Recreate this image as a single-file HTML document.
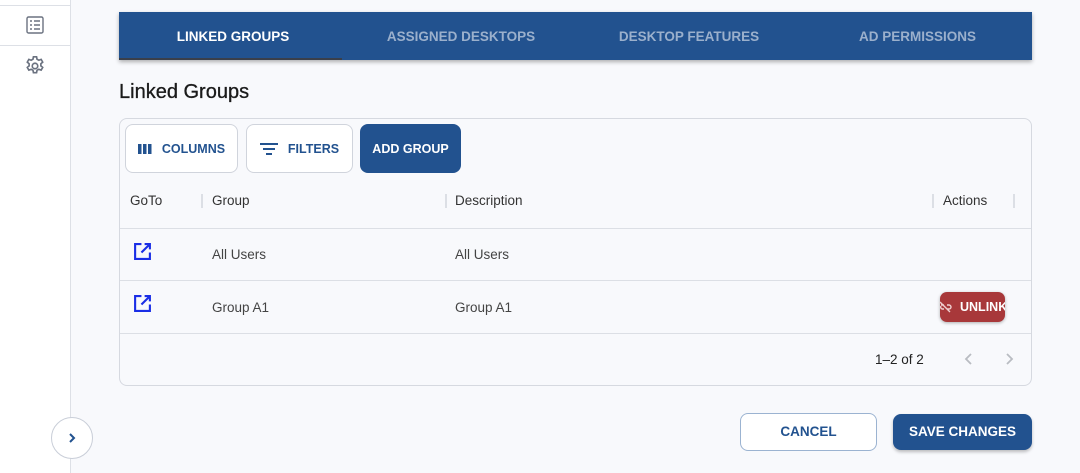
<!DOCTYPE html>
<html><head><style>
*{box-sizing:border-box;margin:0;padding:0}
body{width:1080px;height:473px;background:#f8f9fc;font-family:"Liberation Sans",sans-serif;position:relative;overflow:hidden}
.side{position:absolute;left:0;top:0;width:71px;height:473px;background:#fff;border-right:1px solid #dde0e6}
.abs{position:absolute}
.tabs{position:absolute;left:119px;top:12px;width:913px;height:48px;background:#22528f;box-shadow:0 2px 4px rgba(0,0,0,.3)}
.tab{position:absolute;top:1px;height:48px;line-height:48px;font-size:13.5px;font-weight:bold;text-align:center;color:#9bb0cc}
.card{position:absolute;left:119px;top:118px;width:913px;height:268px;background:#f8f9fc;border:1px solid #d6d9e0;border-radius:8px}
.btn{position:absolute;top:5px;height:49px;border-radius:8px;font-size:12.5px;font-weight:bold;display:flex;align-items:center;justify-content:center;gap:10px}
.t{position:absolute;font-size:13.5px;color:#333}
.line{position:absolute;left:0;width:911px;height:1px;background:#dcdfe5}
.sep{position:absolute;width:2px;height:14px;background:#dcdfe5}
</style></head><body>
<div class="side">
<div class="abs" style="left:0;top:5px;width:70px;height:1px;background:#dde0e6"></div>
<div class="abs" style="left:0;top:45px;width:70px;height:1px;background:#dde0e6"></div>
<svg class="abs" style="left:26px;top:16px" width="18" height="18" viewBox="0 0 18 18" fill="none" stroke="#6b7280" stroke-width="1.4"><rect x="1" y="1" width="16" height="16" rx="1.5"/><path d="M4 5h2M8 5h6M4 9h2M8 9h6M4 13h2M8 13h6"/></svg>
<svg class="abs" style="left:24px;top:55px" width="22" height="22" viewBox="0 0 24 24" fill="none" stroke="#6b7280" stroke-width="1.8"><circle cx="12" cy="12" r="3"/><path d="M10.3 2h3.4l.5 2.6 2 1.1 2.5-.9 1.7 3-2 1.7v2.3l2 1.7-1.7 3-2.5-.9-2 1.1-.5 2.6h-3.4l-.5-2.6-2-1.1-2.5.9-1.7-3 2-1.7V9.5l-2-1.7 1.7-3 2.5.9 2-1.1z"/></svg>
<div class="abs" style="left:51px;top:417px;width:42px;height:42px;border-radius:50%;border:1px solid #c9ced8;background:#fff"></div>
</div>
<svg class="abs" style="left:66px;top:432px" width="12" height="12" viewBox="0 0 12 12" fill="none" stroke="#22528f" stroke-width="2"><path d="M4 2l4 4-4 4"/></svg>
<div class="tabs">
<div class="tab" style="left:0;width:228px;color:#fff">LINKED GROUPS</div>
<div class="abs" style="left:0;top:46px;width:223px;height:2px;background:#3a3f4a"></div>
<div class="tab" style="left:228px;width:228px">ASSIGNED DESKTOPS</div>
<div class="tab" style="left:456px;width:228px">DESKTOP FEATURES</div>
<div class="tab" style="left:684px;width:229px">AD PERMISSIONS</div>
</div>
<div class="abs" style="left:119px;top:81px;font-size:20px;color:#1a1a1a;-webkit-text-stroke:0.3px #1a1a1a">Linked Groups</div>
<div class="card">
<div class="btn" style="left:5px;width:113px;border:1px solid #d0d4dc;color:#22528f;background:#fff"><svg width="14" height="10"><rect x="0" y="0" width="3.5" height="10" fill="#22528f"/><rect x="5" y="0" width="3.5" height="10" fill="#22528f"/><rect x="10" y="0" width="3.5" height="10" fill="#22528f"/></svg>COLUMNS</div>
<div class="btn" style="left:126px;width:107px;border:1px solid #d0d4dc;color:#22528f;background:#fff"><svg width="18" height="12" stroke="#22528f" stroke-width="2"><path d="M0 1h18M3 6h12M6 11h6"/></svg>FILTERS</div>
<div class="btn" style="left:240px;width:101px;background:#22528f;color:#fff">ADD GROUP</div>
<div class="t" style="left:10px;top:74px">GoTo</div><div class="sep" style="left:81px;top:75px"></div>
<div class="t" style="left:92px;top:74px">Group</div><div class="sep" style="left:325px;top:75px"></div>
<div class="t" style="left:335px;top:74px">Description</div><div class="sep" style="left:812px;top:75px"></div>
<div class="t" style="left:823px;top:74px">Actions</div><div class="sep" style="left:893px;top:75px"></div>
<div class="line" style="top:109px"></div>
<svg class="abs" style="left:13px;top:123px" width="19" height="19" viewBox="0 0 18 18" fill="none" stroke="#1a2ee6" stroke-width="2"><path d="M8 2H2v14h14v-6M11 2h5v5M16 2L8 10"/></svg>
<div class="t" style="left:92px;top:128px;color:#444">All Users</div>
<div class="t" style="left:335px;top:128px;color:#444">All Users</div>
<div class="line" style="top:161px"></div>
<svg class="abs" style="left:13px;top:175px" width="19" height="19" viewBox="0 0 18 18" fill="none" stroke="#1a2ee6" stroke-width="2"><path d="M8 2H2v14h14v-6M11 2h5v5M16 2L8 10"/></svg>
<div class="t" style="left:92px;top:181px;color:#444">Group A1</div>
<div class="t" style="left:335px;top:181px;color:#444">Group A1</div>
<div class="abs" style="left:820px;top:173px;width:65px;height:30px;background:#a8383a;border-radius:7px;color:#fff;font-size:12.5px;font-weight:bold;line-height:30px;padding-left:20px;overflow:hidden;white-space:nowrap;box-shadow:0 1px 3px rgba(0,0,0,.3)">UNLINK</div>
<svg class="abs" style="left:819px;top:182px" width="13" height="12" viewBox="0 0 13 12" fill="none" stroke="#f0d0d0" stroke-width="1.4"><path d="M2 4h3M8 4h2a2 2 0 010 4H8M5 8H3a2 2 0 01-1-3M1 1l10 10"/></svg>
<div class="line" style="top:214px"></div>
<div class="t" style="left:755px;top:233px;color:#222">1–2 of 2</div>
<svg class="abs" style="left:843px;top:233px" width="12" height="14" fill="none" stroke="#b9bcc2" stroke-width="1.8"><path d="M8 2L3 7l5 5"/></svg>
<svg class="abs" style="left:883px;top:233px" width="12" height="14" fill="none" stroke="#b9bcc2" stroke-width="1.8"><path d="M4 2l5 5-5 5"/></svg>
</div>
<div class="abs" style="left:740px;top:413px;width:137px;height:38px;border:1px solid #9bb3d1;border-radius:8px;background:#fff;color:#22528f;font-size:13.5px;font-weight:bold;text-align:center;line-height:36px">CANCEL</div>
<div class="abs" style="left:893px;top:414px;width:139px;height:36px;border-radius:8px;background:#22528f;color:#fff;font-size:13.5px;font-weight:bold;text-align:center;line-height:36px;box-shadow:0 2px 3px rgba(0,0,0,.25)">SAVE CHANGES</div>
</body></html>
